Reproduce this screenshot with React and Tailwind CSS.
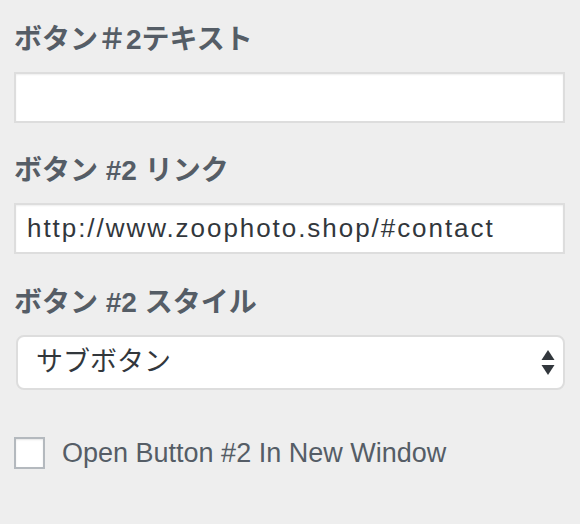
import React from 'react';

const font = "font-['Liberation_Sans','Noto_Sans_CJK_JP',sans-serif]";

const Label = ({ children }) => (
    <div className={`${font} text-[28px] leading-[32px] font-bold text-[#555d66] mb-[16px]`}>
        {children}
    </div>
);

const TextField = ({ value }) => (
    <div className="h-[51px] w-[551px] border-2 border-[#dddddd] bg-white shadow-[inset_0_1px_2px_rgba(0,0,0,0.07)] flex items-center px-[11px]">
        <span className={`${font} text-[26px] tracking-[1.95px] text-[#32373c] whitespace-nowrap`}>{value}</span>
    </div>
);

const App = () => {
    return (
        <div className="min-h-screen bg-[#eeeeee] pl-[14px] pt-[24px]">
            <Label>ボタン＃2テキスト</Label>
            <TextField value="" />

            <div className="mt-[32px]">
                <Label>ボタン #2 リンク</Label>
                <TextField value="http://www.zoophoto.shop/#contact" />
            </div>

            <div className="mt-[33px]">
                <Label>ボタン #2 スタイル</Label>
                <div className="ml-[2px] h-[55px] w-[549px] rounded-[8px] border-2 border-[#dddddd] bg-white flex items-center justify-between pl-[18px] pr-[8px]">
                    <span className={`${font} text-[27px] text-[#32373c]`}>サブボタン</span>
                    {/* up / down arrows */}
                    <svg width="14" height="26" viewBox="0 0 14 26">
                        <path d="M7 0 L13.5 10 L0.5 10 Z" fill="#32373c" />
                        <path d="M0.5 15 L13.5 15 L7 25 Z" fill="#32373c" />
                    </svg>
                </div>
            </div>

            <div className="mt-[43px] flex items-center gap-[17px]">
                <div className="w-[31px] h-[32px] border-2 border-[#b4b9be] bg-white shadow-[inset_0_1px_2px_rgba(0,0,0,0.1)]" />
                <span className={`${font} text-[27px] text-[#555d66]`}>Open Button #2 In New Window</span>
            </div>
        </div>
    );
};

export default App;
